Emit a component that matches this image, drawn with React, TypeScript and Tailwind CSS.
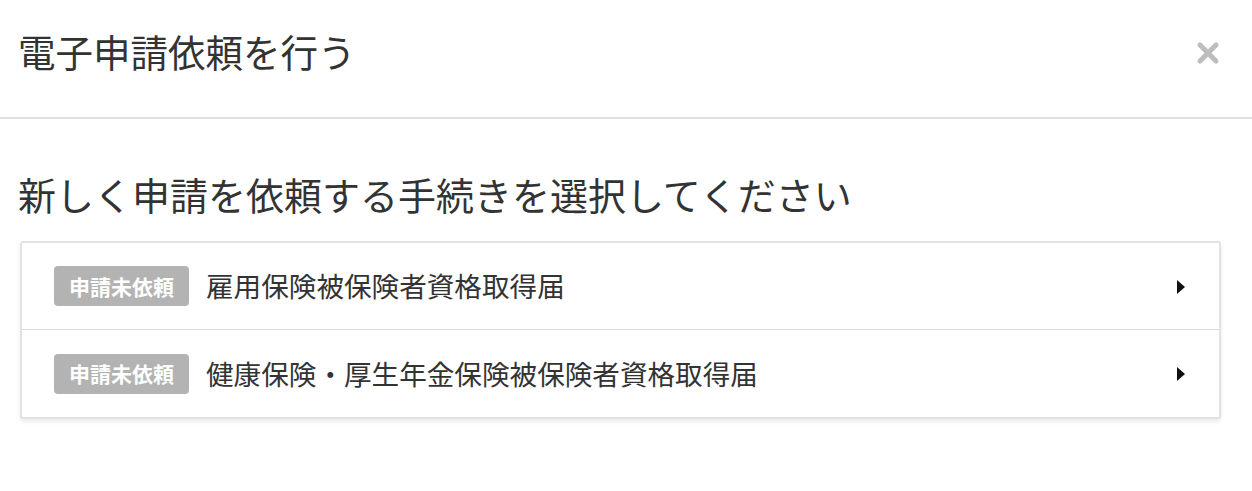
import React from "react";

const font = { fontFamily: '"Noto Sans CJK JP", "Noto Sans", sans-serif' };

function Row({ label, last }: { label: string; last?: boolean }) {
  return (
    <div className={`flex h-[87px] items-center pl-[32px] pr-[33px] ${last ? "" : "border-b border-[#dcdcdc]"}`}>
      <span className="flex h-[40px] w-[135px] items-center justify-center rounded-[4px] bg-[#b3b3b3] text-[21px] font-bold text-white leading-none">
        申請未依頼
      </span>
      <span className="ml-[17px] flex-1 text-[27.6px] text-[#333] leading-none">{label}</span>
      <svg width="10" height="16" viewBox="0 0 10 16" className="mt-[1px]">
        <path d="M1 1 L9 8 L1 15 Z" fill="#111" />
      </svg>
    </div>
  );
}

export default function App() {
  return (
    <div className="h-[491px] w-[1252px] bg-white" style={font}>
      <div className="flex h-[119px] items-center justify-between border-b-2 border-[#e0e0e0] pl-[18px] pr-[32px]">
        <h1 className="-mt-[16px] text-[37.5px] font-normal text-[#333] leading-none">電子申請依頼を行う</h1>
        <svg width="24" height="24" viewBox="0 0 24 24" className="-mt-[12px]">
          <path d="M4 4 L20 20 M20 4 L4 20" stroke="#bdbdbd" strokeWidth="5" strokeLinecap="round" />
        </svg>
      </div>
      <div className="px-[20px] pr-[31px]">
        <h2 className="-ml-[2px] mt-[56px] text-[38px] font-normal text-[#333] leading-none">
          新しく申請を依頼する手続きを選択してください
        </h2>
        <div className="mt-[28px] rounded-[3px] border-2 border-[#e2e2e2] bg-white shadow-[0_3px_4px_rgba(0,0,0,0.08)]">
          <Row label="雇用保険被保険者資格取得届" />
          <Row label="健康保険・厚生年金保険被保険者資格取得届" last />
        </div>
      </div>
    </div>
  );
}
